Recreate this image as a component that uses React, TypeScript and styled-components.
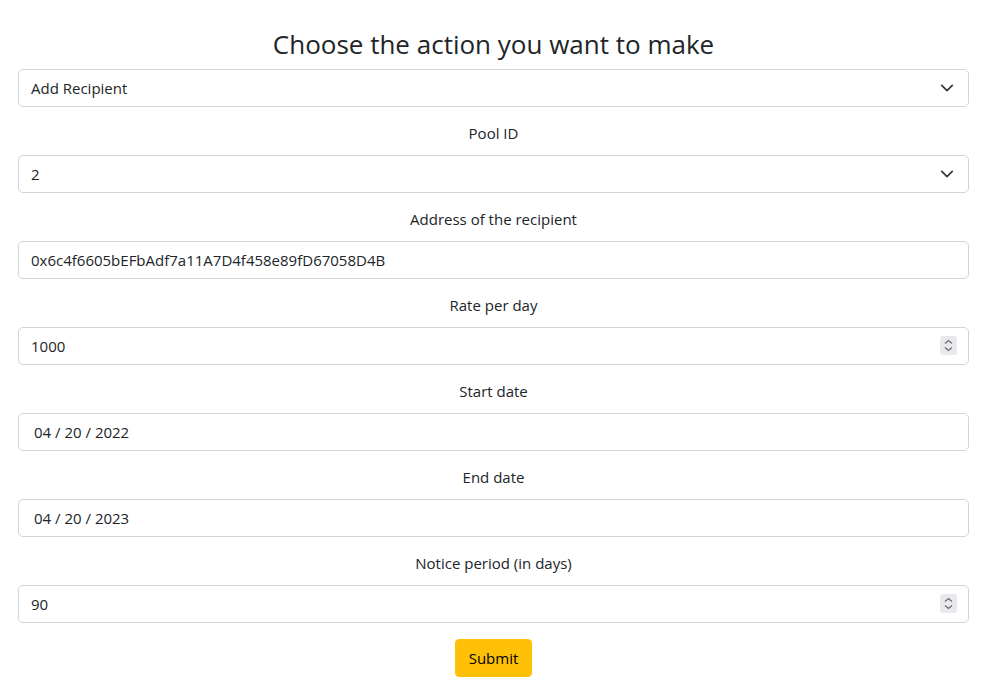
import React from 'react'
import styled, { createGlobalStyle } from 'styled-components'

const Global = createGlobalStyle`
  body {
    margin: 0;
    background: #fff;
    color: #212529;
    font-family: "Open Sans", "Noto Sans", sans-serif;
    font-size: 16px;
  }
`

const Page = styled.div`
  width: 951px;
  margin-left: 18px;
  padding-top: 27px;
  display: flex;
  flex-direction: column;
  align-items: stretch;
`

const Title = styled.h2`
  margin: 0 0 8px;
  font-size: 26px;
  font-weight: 400;
  line-height: 34px;
  text-align: center;
`

const Label = styled.label`
  display: block;
  text-align: center;
  line-height: 24px;
  padding: 14px 0 10px;
  font-size: 15px;
`

const Field = styled.div<{ $inset?: number }>`
  position: relative;
  box-sizing: border-box;
  height: 38px;
  border: 1px solid #ced4da;
  border-radius: 5px;
  display: flex;
  align-items: center;
  padding: 0 12px 1px ${(p) => p.$inset ?? 12}px;
  font-size: 15px;
  background: #fff;
`

const Value = styled.span`
  flex: 1;
`

const Chevron = styled.svg`
  width: 14px;
  height: 14px;
  margin-right: 2px;
`

const Spinner = styled.span`
  width: 17px;
  height: 19px;
  background: #e9e9ed;
  border-radius: 3px;
  display: flex;
  align-items: center;
  justify-content: center;
  margin-right: -1px;
`

const SubmitRow = styled.div`
  display: flex;
  justify-content: center;
  padding-top: 16px;
`

const Button = styled.button`
  height: 38px;
  padding: 0 13px;
  background: #ffc107;
  border: 1px solid #ffc107;
  border-radius: 4px;
  font-family: inherit;
  font-size: 15px;
  color: #000;
`

const Select: React.FC<{ value: string }> = ({ value }) => (
  <Field>
    <Value>{value}</Value>
    <Chevron viewBox="0 0 16 16">
      <path d="M2 5l6 6 6-6" fill="none" stroke="#343a40" strokeWidth="2" strokeLinecap="round" strokeLinejoin="round" />
    </Chevron>
  </Field>
)

const NumberInput: React.FC<{ value: string }> = ({ value }) => (
  <Field>
    <Value>{value}</Value>
    <Spinner>
      <svg width="11" height="15" viewBox="0 0 11 15">
        <path d="M2 5.5l3.5-3 3.5 3M2 9.5l3.5 3 3.5-3" fill="none" stroke="#6b6b70" strokeWidth="1.2" />
      </svg>
    </Spinner>
  </Field>
)

export default function App() {
  return (
    <>
      <Global />
      <Page>
        <Title>Choose the action you want to make</Title>
        <Select value="Add Recipient" />
        <Label>Pool ID</Label>
        <Select value="2" />
        <Label>Address of the recipient</Label>
        <Field>
          <Value>0x6c4f6605bEFbAdf7a11A7D4f458e89fD67058D4B</Value>
        </Field>
        <Label>Rate per day</Label>
        <NumberInput value="1000" />
        <Label>Start date</Label>
        <Field $inset={15}>
          <Value>04 / 20 / 2022</Value>
        </Field>
        <Label>End date</Label>
        <Field $inset={15}>
          <Value>04 / 20 / 2023</Value>
        </Field>
        <Label>Notice period (in days)</Label>
        <NumberInput value="90" />
        <SubmitRow>
          <Button>Submit</Button>
        </SubmitRow>
      </Page>
    </>
  )
}
